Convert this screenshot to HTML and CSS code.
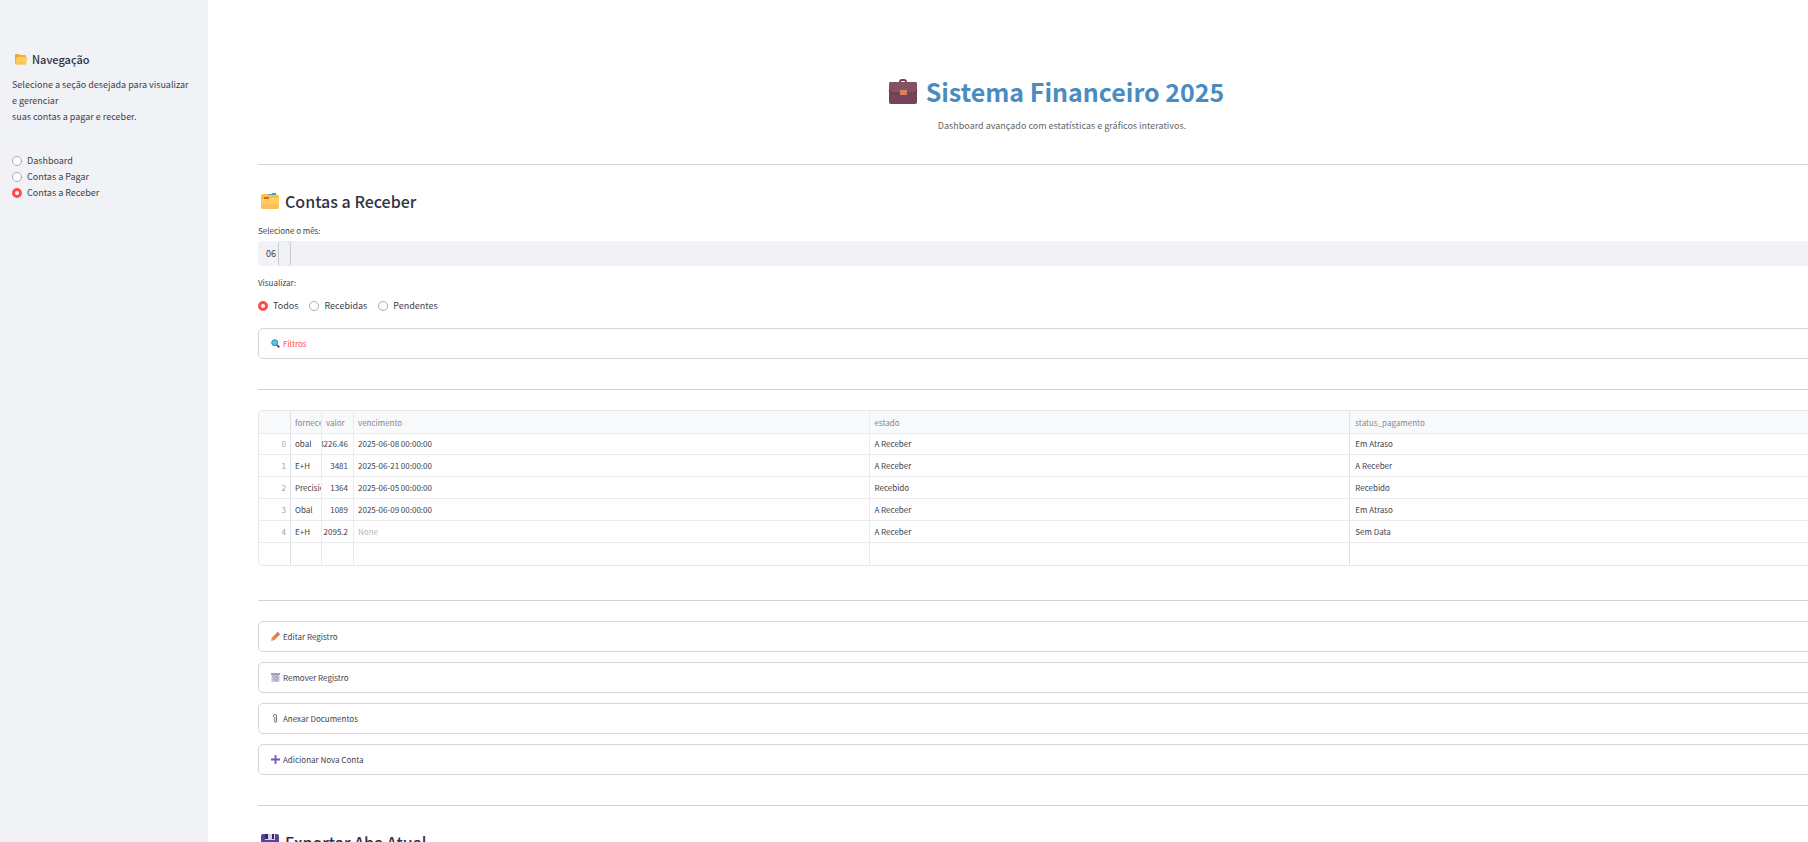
FILE: index.html
```html
<!DOCTYPE html>
<html lang="pt-BR">
<head>
<meta charset="utf-8">
<title>Sistema Financeiro 2025</title>
<link rel="stylesheet" href="styles.css">
</head>
<body>
<div class="app">
  <aside class="sidebar">
    <h3 class="nav-title">
      <svg class="icon-nav" viewBox="0 0 14 14" aria-hidden="true"><path d="M1 3q0-1 1-1h3l1 1h5q1 0 1 1v8H1z" fill="#f0a93a"/><path d="M3 5h10.500l-1.500 7.500H1.200z" fill="#ffd05c"/><path d="M2 9.500h10.500l-.6 3H1.200z" fill="#fdc062"/></svg>
      Navegação
    </h3>
    <p class="nav-text">Selecione a seção desejada para visualizar e gerenciar<br>suas contas a pagar e receber.</p>
    <div class="nav-options">
      <label class="option"><input type="radio" name="page">Dashboard</label>
      <label class="option"><input type="radio" name="page">Contas a Pagar</label>
      <label class="option"><input type="radio" name="page" checked>Contas a Receber</label>
    </div>
  </aside>
  <main class="main">
    <header class="hero">
      <h1 class="hero-title">
        <svg class="icon-hero" viewBox="0 0 30 28" aria-hidden="true"><path d="M12 6V5q0-2 2-2h2q2 0 2 2v1" fill="none" stroke="#71444e" stroke-width="2"/><rect x="1" y="5" width="28" height="22" rx="2" fill="#74445a"/><path d="M1 7q0-2 2-2h24q2 0 2 2v6q0 3-4 3H5q-4 0-4-3z" fill="#855260"/><path d="M1 13q0 3 4 3h20q4 0 4-3" fill="none" stroke="#653b4f"/><rect x="12" y="13" width="7" height="5" fill="#d98060"/></svg>
        Sistema Financeiro 2025
      </h1>
      <p class="hero-text">Dashboard avançado com estatísticas e gráficos interativos.</p>
    </header>
    <hr class="rule">
    <section class="filters">
      <h2 class="heading">
        <svg class="icon-heading" viewBox="0 0 20 18" aria-hidden="true"><path d="M12 3V1h4v2z" fill="#2fb783"/><path d="M8 4V2h5v2z" fill="#3d9be0"/><path d="M1 4q0-2 2-2h5l1 1h9q1 0 1 2v4H1z" fill="#f9c046"/><path d="M4 5h5v2H4z" fill="#ee5148"/><path d="M1 7h7l2-1h9v9q0 2-2 2H3q-2 0-2-2z" fill="#ffd15a"/><path d="M1 12h18v3q0 2-2 2H3q-2 0-2-2z" fill="#fdbf5c"/></svg>
        Contas a Receber
      </h2>
      <label class="field-label month-label" for="month">Selecione o mês:</label>
      <div class="month-box">
        <select class="month" id="month"><option>06</option></select>
        <span class="month-cursor"></span>
      </div>
      <p class="field-label view-label" id="view-label">Visualizar:</p>
      <div class="view-options" role="radiogroup" aria-labelledby="view-label">
        <label class="option"><input type="radio" name="view" checked>Todos</label>
        <label class="option"><input type="radio" name="view">Recebidas</label>
        <label class="option"><input type="radio" name="view">Pendentes</label>
      </div>
      <button class="expander active" type="button">
        <svg class="icon-small" viewBox="0 0 9 9" aria-hidden="true"><path d="M6 6l2.300 2.300" stroke="#6d3a72" stroke-width="1.800"/><circle cx="3.700" cy="3.700" r="3" fill="#55c8e8" stroke="#3d82ad"/></svg>
        Filtros
      </button>
    </section>
    <hr class="rule">
    <table class="grid">
      <colgroup><col class="c-index"><col class="c-name"><col class="c-value"><col class="c-due"><col class="c-state"><col class="c-status"></colgroup>
      <thead>
        <tr><th></th><th>fornecedor</th><th>valor</th><th>vencimento</th><th>estado</th><th>status_pagamento</th></tr>
      </thead>
      <tbody>
        <tr><td class="num">0</td><td>obal</td><td><span class="amount">3226.46</span></td><td>2025-06-08 00:00:00</td><td>A Receber</td><td>Em Atraso</td></tr>
        <tr><td class="num">1</td><td>E+H</td><td><span class="amount">3481</span></td><td>2025-06-21 00:00:00</td><td>A Receber</td><td>A Receber</td></tr>
        <tr><td class="num">2</td><td>Precision</td><td><span class="amount">1364</span></td><td>2025-06-05 00:00:00</td><td>Recebido</td><td>Recebido</td></tr>
        <tr><td class="num">3</td><td>Obal</td><td><span class="amount">1089</span></td><td>2025-06-09 00:00:00</td><td>A Receber</td><td>Em Atraso</td></tr>
        <tr><td class="num">4</td><td>E+H</td><td><span class="amount">2095.2</span></td><td class="none">None</td><td>A Receber</td><td>Sem Data</td></tr>
        <tr><td></td><td></td><td></td><td></td><td></td><td></td></tr>
      </tbody>
    </table>
    <hr class="rule">
    <section class="actions">
      <button class="expander" type="button">
        <svg class="icon-small" viewBox="0 0 9 9" aria-hidden="true"><path d="M.3 8.700L1 5.500l5-5 2.500 2.500-5 5z" fill="#f47b3f"/><path d="M5.700 1l1-1L9 2.300l-1 1z" fill="#e8507a"/><path d="M.3 8.700L1 6l2 2z" fill="#e9a06d"/></svg>
        Editar Registro
      </button>
      <button class="expander" type="button">
        <svg class="icon-small" viewBox="0 0 9 9" aria-hidden="true"><path d="M0 0h9v2H0z" fill="#a29cb5"/><path d="M.5 2h8v7h-8z" fill="#cac6d6"/><path d="M1 3l5 5M3 2l5 5M7 2L2 7M8 4L4 8" stroke="#9a94ae" stroke-width=".7"/></svg>
        Remover Registro
      </button>
      <button class="expander" type="button">
        <svg class="icon-small" viewBox="0 0 9 9" aria-hidden="true"><path d="M2.500 3V2q0-1.500 1.500-1.500T5.500 2v5q0 1.500-.9 1.500T3.700 7V3" fill="none" stroke="#77737d"/></svg>
        Anexar Documentos
      </button>
      <button class="expander" type="button">
        <svg class="icon-small" viewBox="0 0 9 9" aria-hidden="true"><path d="M4.500 0v9M0 4.500h9" stroke="#7b52c4" stroke-width="1.800"/></svg>
        Adicionar Nova Conta
      </button>
    </section>
    <hr class="rule">
    <h2 class="heading">
      <svg class="icon-heading" viewBox="0 0 20 18" aria-hidden="true"><path d="M1 3q0-2 2-2h14q2 0 2 2v14H1z" fill="#55459a"/><path d="M5 1h10v6H5z" fill="#d9cfe6"/><path d="M5 1h3v5H5zM12 1h2v5h-2z" fill="#35255f"/><path d="M4 11h12v6H4z" fill="#e9e3f2"/></svg>
      Exportar Aba Atual
    </h2>
  </main>
</div>
</body>
</html>
```
FILE: styles.css
```css
* { box-sizing: border-box; }
body {
  margin: 0;
  height: 100vh;
  overflow: hidden;
  background: #fff;
  color: #3f414c;
  font-family: "Noto Sans CJK SC", "Noto Sans", sans-serif;
  font-size: 9px;
  line-height: 16px;
}
h1, h2, h3, p { margin: 0; }
.app { display: flex; min-height: 100vh; }
.sidebar {
  flex: 0 0 208px;
  padding: 51px 16px 0 12px;
  background: #f0f2f6;
}
.nav-title {
  display: flex;
  align-items: center;
  gap: 4px;
  padding-left: 2px;
  color: #31333f;
  font-size: 11px;
  font-weight: 500;
}
.icon-nav { width: 14px; height: 14px; }
.nav-text { margin-top: 10px; }
.nav-options { margin-top: 28px; }
.option { display: flex; align-items: center; gap: 5px; }
.option input {
  appearance: none;
  width: 10px;
  height: 10px;
  margin: 0;
  border: 1px solid #a9abb3;
  border-radius: 50%;
  background: #fff;
}
.option input:checked { border: 3px solid #ff4b4b; }
.main {
  flex: 1 0 auto;
  width: calc(100% - 208px);
  margin-right: -46px;
  padding: 75px 0 0 50px;
}
.hero { text-align: center; }
.hero-title {
  display: flex;
  align-items: center;
  justify-content: center;
  gap: 8px;
  color: #4a8bc2;
  font-size: 25px;
  font-weight: 700;
  line-height: 32px;
}
.icon-hero { width: 30px; height: 28px; }
.hero-text { margin-top: 11px; padding-left: 12px; color: #666; }
.rule { margin: 30px 0 20px; border: 0; border-top: 1px solid #d3d3d5; }
.heading {
  display: flex;
  align-items: center;
  gap: 5px;
  padding-left: 2px;
  color: #31333f;
  font-size: 16px;
  font-weight: 500;
  line-height: 32px;
}
.icon-heading { width: 20px; height: 18px; }
.field-label { display: block; font-size: 8px; }
.month-label { margin: 6px 0 2px; }
.month-box { position: relative; height: 25px; }
.month {
  appearance: none;
  width: 100%;
  height: 25px;
  padding: 0 8px;
  border: 0;
  border-radius: 4px;
  background: #f0f2f6;
  color: inherit;
  font: inherit;
}
.month-cursor {
  position: absolute;
  top: 0;
  left: 20px;
  width: 13px;
  height: 25px;
  border: solid #c8c9ce;
  border-width: 0 1px;
  border-radius: 4px;
}
.view-label { margin-top: 9px; }
.view-options { display: flex; gap: 11px; margin: 7px 0 14px; }
.expander {
  display: flex;
  align-items: center;
  gap: 3px;
  width: 100%;
  height: 31px;
  padding: 0 12px;
  border: 1px solid #d4d5d7;
  border-radius: 5px;
  background: #fff;
  color: inherit;
  font: inherit;
  font-size: 8px;
}
.expander.active { color: #ff4b4b; }
.icon-small { width: 9px; height: 9px; }
.actions { display: grid; gap: 10px; }
.grid {
  width: 100%;
  margin-bottom: 34px;
  table-layout: fixed;
  border: 1px solid #e6e7e9;
  border-radius: 5px;
  border-spacing: 0;
  overflow: hidden;
  font-size: 8px;
}
.c-index, .c-value { width: 32px; }
.c-name { width: 31px; }
.c-due { width: 32.4%; }
.c-state { width: 30.1%; }
.grid th, .grid td {
  height: 22px;
  padding: 0 4px;
  border: solid #ececef;
  border-width: 0 1px 1px 0;
  text-align: left;
  white-space: nowrap;
  overflow: hidden;
}
.grid th {
  height: 23px;
  padding-top: 2px;
  background: #f8f9fb;
  color: #85868e;
  font-weight: 400;
}
.grid th:nth-child(2), .grid td:nth-child(2) { padding-right: 0; }
.grid th:nth-child(1), .grid td:nth-child(1),
.grid th:nth-child(5), .grid td:nth-child(5) { border-right-color: #e0e1e4; }
.grid td:nth-child(3) { padding: 0 5px 0 0; }
.grid th:nth-child(6), .grid td:nth-child(6) { padding-left: 5px; }
.grid tr:first-child td { height: 21px; }
.grid tr:last-child td { border-bottom: 0; }
.grid td.num { color: #a0a1a8; text-align: right; }
.grid td.none { color: #b5b6bb; }
.amount { display: flex; justify-content: flex-end; }
```
